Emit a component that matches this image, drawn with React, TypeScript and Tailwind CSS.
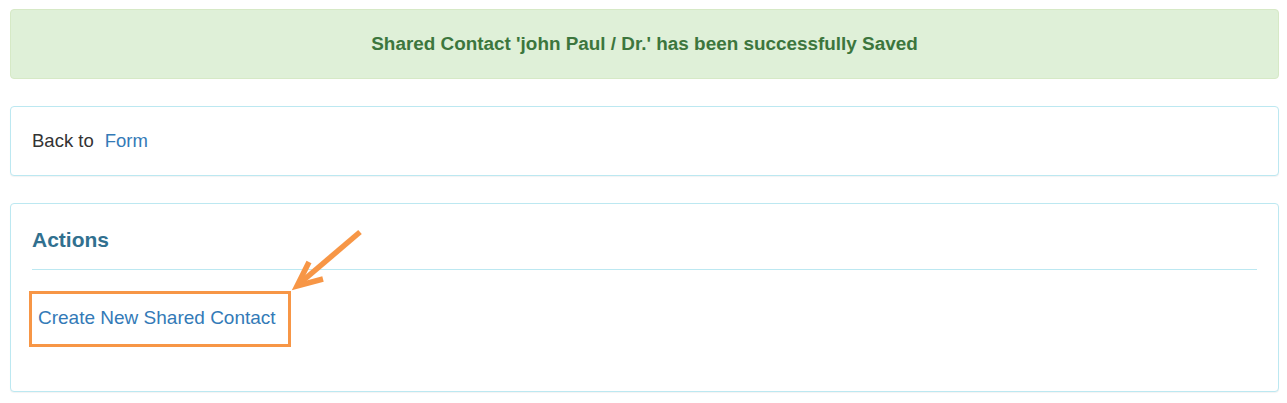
import React from 'react'

export default function App() {
  return (
    <div
      className="relative w-[1287px] h-[403px] bg-white pl-[10px] pr-[8px] pt-[9px]"
      style={{ fontFamily: '"Liberation Sans", Arial, sans-serif' }}
    >
      {/* Success alert */}
      <div className="h-[70px] rounded-[4px] border border-[#d6e9c6] bg-[#dff0d8] flex items-center justify-center">
        <span className="text-[18.9px] font-bold text-[#3c763d]">
          Shared Contact &apos;john Paul / Dr.&apos; has been successfully Saved
        </span>
      </div>

      {/* Back link panel */}
      <div className="mt-[27px] h-[70px] rounded-[4px] border border-[#bce8f1] bg-white flex items-center px-[21px] shadow-[0_1px_1px_rgba(0,0,0,0.05)]">
        <span className="text-[18.5px] text-[#333333]">Back to</span>
        <a href="#" className="ml-[11px] text-[18.5px] text-[#337ab7]">Form</a>
      </div>

      {/* Actions panel */}
      <div className="mt-[27px] h-[189px] rounded-[4px] border border-[#bce8f1] bg-white px-[21px] pt-[23px] shadow-[0_1px_1px_rgba(0,0,0,0.05)]">
        <h3 className="text-[21px] font-bold text-[#31708f] leading-[26px]">Actions</h3>
        <div className="mt-[16px] border-t border-[#bce8f1]" />
        <div className="mt-[21px] -ml-[3px]">
          <a
            href="#"
            className="inline-flex items-center h-[56px] border-[3px] border-[#f79646] pl-[6px] pr-[12px] pb-[2px] text-[19px] text-[#337ab7]"
          >
            Create New Shared Contact
          </a>
        </div>
      </div>

      {/* Annotation arrow */}
      <svg
        className="absolute left-0 top-0 pointer-events-none"
        width="1287"
        height="403"
        viewBox="0 0 1287 403"
      >
        <g stroke="#f79646" strokeWidth="5.5" strokeLinecap="butt" strokeLinejoin="miter" fill="none">
          <line x1="360" y1="232" x2="299" y2="284" />
          <polyline points="309,262 297,286 323,279" />
        </g>
      </svg>
    </div>
  )
}
